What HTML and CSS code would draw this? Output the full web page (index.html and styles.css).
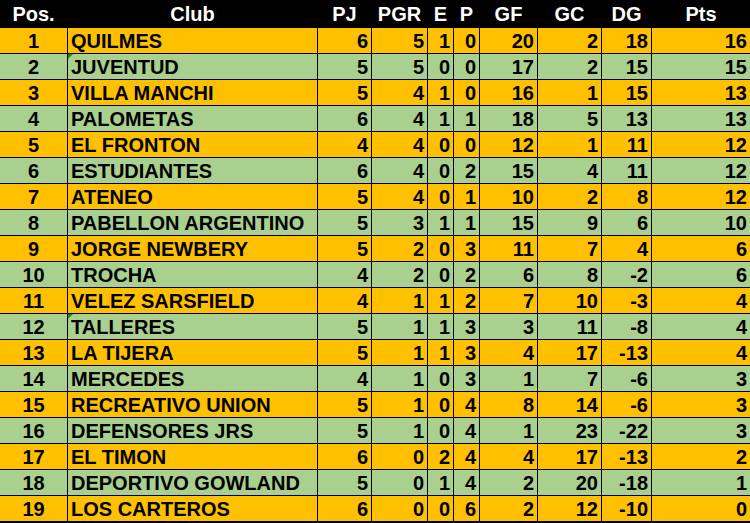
FILE: index.html
```html
<!DOCTYPE html>
<html lang="es">
<head>
<meta charset="utf-8">
<title>Posiciones</title>
<link rel="stylesheet" href="styles.css">
</head>
<body>
<div class="table">
  <div class="row head">
    <div class="c">Pos.</div><div class="c">Club</div><div class="c">PJ</div><div class="c">PGR</div><div class="c">E</div><div class="c">P</div><div class="c">GF</div><div class="c">GC</div><div class="c">DG</div><div class="c">Pts</div>
  </div>
  <div class="row o"><div class="c">1</div><div class="l">QUILMES</div><div class="n">6</div><div class="n">5</div><div class="n">1</div><div class="n">0</div><div class="n">20</div><div class="n">2</div><div class="n">18</div><div class="n">16</div></div>
  <div class="row g"><div class="c">2</div><div class="l flag">JUVENTUD</div><div class="n">5</div><div class="n">5</div><div class="n">0</div><div class="n">0</div><div class="n">17</div><div class="n">2</div><div class="n">15</div><div class="n">15</div></div>
  <div class="row o"><div class="c">3</div><div class="l">VILLA MANCHI</div><div class="n">5</div><div class="n">4</div><div class="n">1</div><div class="n">0</div><div class="n">16</div><div class="n">1</div><div class="n">15</div><div class="n">13</div></div>
  <div class="row g"><div class="c">4</div><div class="l">PALOMETAS</div><div class="n">6</div><div class="n">4</div><div class="n">1</div><div class="n">1</div><div class="n">18</div><div class="n">5</div><div class="n">13</div><div class="n">13</div></div>
  <div class="row o"><div class="c">5</div><div class="l">EL FRONTON</div><div class="n">4</div><div class="n">4</div><div class="n">0</div><div class="n">0</div><div class="n">12</div><div class="n">1</div><div class="n">11</div><div class="n">12</div></div>
  <div class="row g"><div class="c">6</div><div class="l">ESTUDIANTES</div><div class="n">6</div><div class="n">4</div><div class="n">0</div><div class="n">2</div><div class="n">15</div><div class="n">4</div><div class="n">11</div><div class="n">12</div></div>
  <div class="row o"><div class="c">7</div><div class="l">ATENEO</div><div class="n">5</div><div class="n">4</div><div class="n">0</div><div class="n">1</div><div class="n">10</div><div class="n">2</div><div class="n">8</div><div class="n">12</div></div>
  <div class="row g"><div class="c">8</div><div class="l">PABELLON ARGENTINO</div><div class="n">5</div><div class="n">3</div><div class="n">1</div><div class="n">1</div><div class="n">15</div><div class="n">9</div><div class="n">6</div><div class="n">10</div></div>
  <div class="row o"><div class="c">9</div><div class="l">JORGE NEWBERY</div><div class="n">5</div><div class="n">2</div><div class="n">0</div><div class="n">3</div><div class="n">11</div><div class="n">7</div><div class="n">4</div><div class="n">6</div></div>
  <div class="row g"><div class="c">10</div><div class="l">TROCHA</div><div class="n">4</div><div class="n">2</div><div class="n">0</div><div class="n">2</div><div class="n">6</div><div class="n">8</div><div class="n">-2</div><div class="n">6</div></div>
  <div class="row o"><div class="c">11</div><div class="l">VELEZ SARSFIELD</div><div class="n">4</div><div class="n">1</div><div class="n">1</div><div class="n">2</div><div class="n">7</div><div class="n">10</div><div class="n">-3</div><div class="n">4</div></div>
  <div class="row g"><div class="c">12</div><div class="l flag">TALLERES</div><div class="n">5</div><div class="n">1</div><div class="n">1</div><div class="n">3</div><div class="n">3</div><div class="n">11</div><div class="n">-8</div><div class="n">4</div></div>
  <div class="row o"><div class="c">13</div><div class="l">LA TIJERA</div><div class="n">5</div><div class="n">1</div><div class="n">1</div><div class="n">3</div><div class="n">4</div><div class="n">17</div><div class="n">-13</div><div class="n">4</div></div>
  <div class="row g"><div class="c">14</div><div class="l">MERCEDES</div><div class="n">4</div><div class="n">1</div><div class="n">0</div><div class="n">3</div><div class="n">1</div><div class="n">7</div><div class="n">-6</div><div class="n">3</div></div>
  <div class="row o"><div class="c">15</div><div class="l">RECREATIVO UNION</div><div class="n">5</div><div class="n">1</div><div class="n">0</div><div class="n">4</div><div class="n">8</div><div class="n">14</div><div class="n">-6</div><div class="n">3</div></div>
  <div class="row g"><div class="c">16</div><div class="l">DEFENSORES JRS</div><div class="n">5</div><div class="n">1</div><div class="n">0</div><div class="n">4</div><div class="n">1</div><div class="n">23</div><div class="n">-22</div><div class="n">3</div></div>
  <div class="row o"><div class="c">17</div><div class="l">EL TIMON</div><div class="n">6</div><div class="n">0</div><div class="n">2</div><div class="n">4</div><div class="n">4</div><div class="n">17</div><div class="n">-13</div><div class="n">2</div></div>
  <div class="row g"><div class="c">18</div><div class="l">DEPORTIVO GOWLAND</div><div class="n">5</div><div class="n">0</div><div class="n">1</div><div class="n">4</div><div class="n">2</div><div class="n">20</div><div class="n">-18</div><div class="n">1</div></div>
  <div class="row o"><div class="c">19</div><div class="l">LOS CARTEROS</div><div class="n">6</div><div class="n">0</div><div class="n">0</div><div class="n">6</div><div class="n">2</div><div class="n">12</div><div class="n">-10</div><div class="n">0</div></div>
</div>
</body>
</html>
```
FILE: styles.css
```css
* { box-sizing: border-box; }
html, body { margin: 0; padding: 0; background: #000; }
.table {
  width: 750px;
  display: grid;
  grid-template-columns: 67px 249px 53px 55px 25px 25px 57px 63px 49px 98px;
  grid-template-rows: 27px repeat(19, 25px);
  column-gap: 1px;
  row-gap: 1px;
  background: #000;
  padding-bottom: 2px;
  font-family: "Liberation Sans", Arial, sans-serif;
  font-weight: bold;
  font-size: 20px;
  color: #000;
}
.row { display: contents; }
.row > div {
  display: flex;
  align-items: center;
  white-space: nowrap;
  overflow: hidden;
  line-height: 1;
  padding-top: 1px;
}
.head > div { background: #000; color: #fff; justify-content: center; padding-top: 0; }
.o > div { background: #FFC000; }
.g > div { background: #A9D08E; }
.c { justify-content: center; }
.l { justify-content: flex-start; padding-left: 3px; }
.n { justify-content: flex-end; padding-right: 3px; }
.flag { position: relative; }
.flag::before {
  content: "";
  position: absolute;
  left: 0;
  top: 0;
  border-top: 5px solid #1F8B24;
  border-right: 5px solid transparent;
}
```
